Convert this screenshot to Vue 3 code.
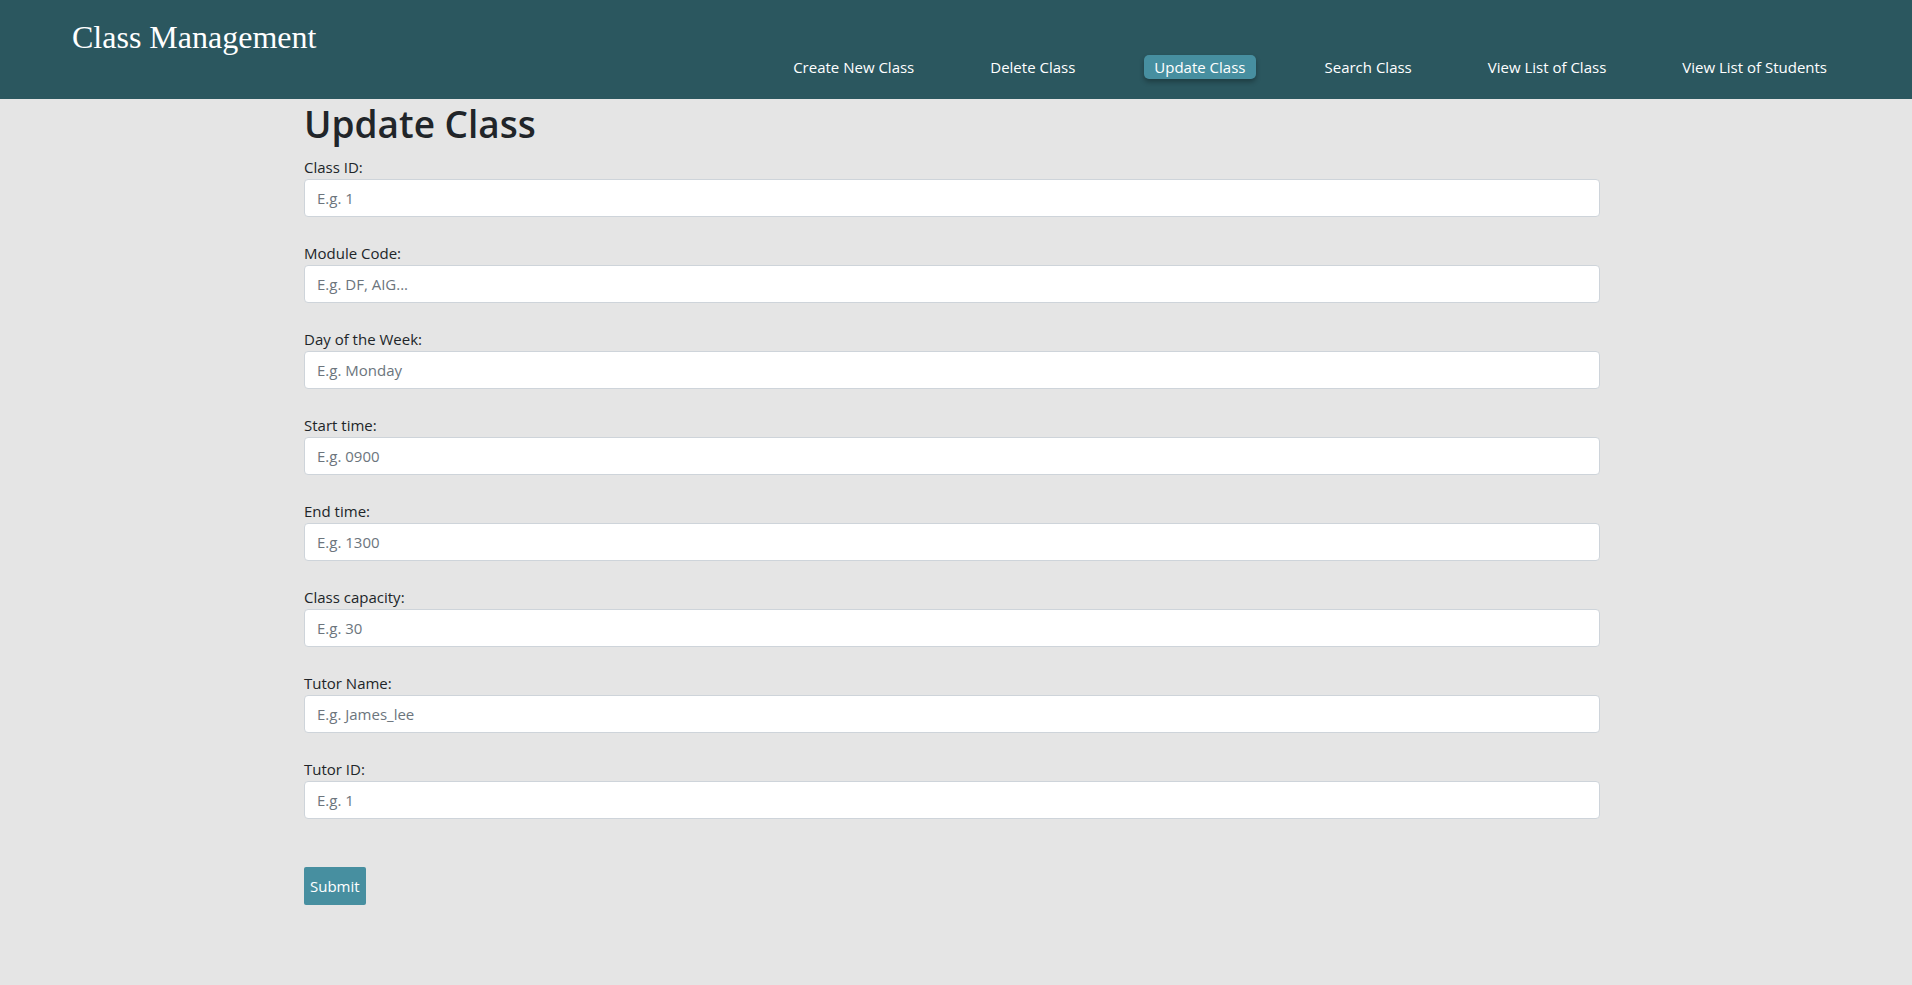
<script setup>
import { reactive } from 'vue'

const links = [
  'Create New Class',
  'Delete Class',
  'Update Class',
  'Search Class',
  'View List of Class',
  'View List of Students',
]
const current = 'Update Class'

const fields = [
  { id: 'class-id', label: 'Class ID:', hint: 'E.g. 1' },
  { id: 'module-code', label: 'Module Code:', hint: 'E.g. DF, AIG...' },
  { id: 'day', label: 'Day of the Week:', hint: 'E.g. Monday' },
  { id: 'start-time', label: 'Start time:', hint: 'E.g. 0900' },
  { id: 'end-time', label: 'End time:', hint: 'E.g. 1300' },
  { id: 'capacity', label: 'Class capacity:', hint: 'E.g. 30' },
  { id: 'tutor-name', label: 'Tutor Name:', hint: 'E.g. James_lee' },
  { id: 'tutor-id', label: 'Tutor ID:', hint: 'E.g. 1' },
]
const form = reactive(Object.fromEntries(fields.map((f) => [f.id, ''])))
</script>

<template>
  <div class="page">
    <header class="topbar">
      <a class="brand" href="#">Class Management</a>
      <nav class="nav">
        <a
          v-for="link in links"
          :key="link"
          href="#"
          class="nav-link"
          :class="{ active: link === current }"
          :aria-current="link === current ? 'page' : undefined"
        >{{ link }}</a>
      </nav>
    </header>
    <main class="content">
      <h1 class="title">Update Class</h1>
      <form class="form" @submit.prevent>
        <div v-for="field in fields" :key="field.id" class="field">
          <label :for="field.id">{{ field.label }}</label>
          <input :id="field.id" v-model="form[field.id]" type="text" :placeholder="field.hint" />
        </div>
        <button class="submit" type="submit">Submit</button>
      </form>
    </main>
  </div>
</template>

<style>
body {
  background: #e5e5e5;
}
</style>

<style scoped>
.page,
.page * {
  box-sizing: border-box;
}
.page {
  min-height: 100vh;
  background: #e5e5e5;
  color: #212529;
  font-family: "Segoe UI", "Open Sans", "Noto Sans", sans-serif;
  font-size: 15px;
  line-height: 24px;
}
.topbar {
  display: flex;
  justify-content: space-between;
  align-items: flex-start;
  padding: 13px 75px 20px 72px;
  background: #2b575f;
}
.brand {
  color: #fff;
  font-family: "Liberation Serif", serif;
  font-size: 32px;
  line-height: 48px;
  text-decoration: none;
  white-space: nowrap;
}
.nav {
  display: flex;
  gap: 56px;
  padding-top: 42px;
}
.nav-link {
  padding: 0 10px;
  border-radius: 5px;
  color: #fff;
  text-decoration: none;
  white-space: nowrap;
}
.nav-link.active {
  margin: 0 3px;
  background: #478fa0;
  box-shadow: 0 3px 5px rgba(0, 0, 0, 0.3);
}
.content {
  padding: 0 312px 48px 304px;
}
.title {
  margin: 0 0 6px;
  font-size: 37px;
  font-weight: 600;
  line-height: 50px;
}
.form {
  display: flex;
  flex-direction: column;
  align-items: flex-start;
  gap: 24px;
}
.field {
  display: flex;
  flex-direction: column;
  width: 100%;
}
.field input {
  width: 100%;
  height: 38px;
  padding: 6px 12px;
  border: 1px solid #ced4da;
  border-radius: 4px;
  background: #fff;
  color: #495057;
  font: inherit;
}
.field input::placeholder {
  color: #6c757d;
  opacity: 1;
}
.submit {
  height: 38px;
  margin-top: 24px;
  padding: 0 6px;
  border: 0;
  border-radius: 2px;
  background: #478fa0;
  color: #fff;
  font: inherit;
}
</style>
